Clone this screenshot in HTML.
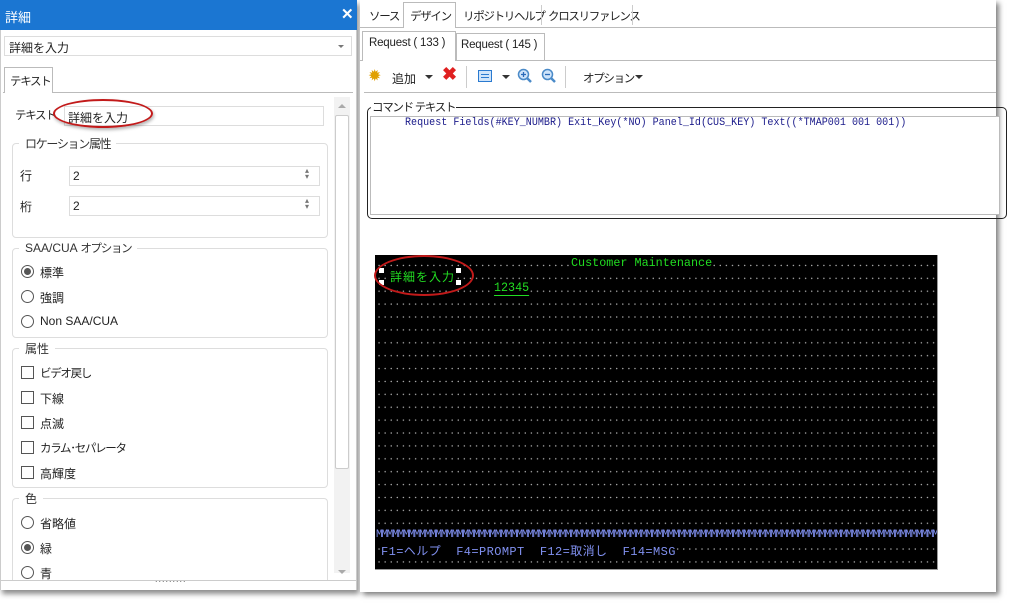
<!DOCTYPE html>
<html><head><meta charset="utf-8"><style>
*{box-sizing:border-box;margin:0;padding:0}
body{width:1010px;height:607px;background:#fff;position:relative;overflow:hidden;font-family:"Liberation Sans","Noto Sans CJK JP",sans-serif;font-size:12px;color:#222}
.a{position:absolute}
.box{position:absolute;border:1px solid #ddd;background:#fff}
.grp{position:absolute;border:1px solid #ddd;border-radius:4px}
.grp>.lg{position:absolute;top:-9px;left:6px;background:#fff;padding:0 6px;font-size:12px;color:#333;white-space:nowrap}
.rad{position:absolute;width:13px;height:13px;border:1px solid #555;border-radius:50%;background:#fff}
.rad.on::after{content:"";position:absolute;left:2px;top:2px;width:7px;height:7px;border-radius:50%;background:#555}
.chk{position:absolute;width:13px;height:13px;border:1px solid #555;background:#fff}
.t{position:absolute;font-size:12px;white-space:nowrap}
.k{font-size:11.5px;letter-spacing:-1.3px}
.mono{font-family:"Liberation Mono","Noto Sans CJK JP",monospace}
</style></head><body>
<!-- left panel -->
<div class="a" style="left:0;top:0;width:357px;height:590px;border:1px solid #ccc;box-shadow:2px 4px 5px rgba(0,0,0,.45)"></div>
<div class="a" style="left:0;top:0;width:357px;height:30px;background:#1b76d2"></div>
<div class="t" style="left:5px;top:7px;color:#fff;font-size:13px">詳細</div>
<div class="t" style="left:341px;top:5px;color:#fff;font-size:15px;font-weight:bold">✕</div>
<div class="box" style="left:4px;top:36px;width:348px;height:20px"></div>
<div class="t" style="left:9px;top:39px">詳細を入力</div>
<div class="a" style="left:338px;top:45px;border-left:3px solid transparent;border-right:3px solid transparent;border-top:3px solid #777"></div>
<div class="a" style="left:3px;top:92px;width:350px;height:1px;background:#bbb"></div>
<div class="a" style="left:4px;top:67px;width:49px;height:26px;border:1px solid #bbb;border-bottom:none;background:#fff"></div>
<div class="t k" style="left:10px;top:73px">テキスト</div>
<div class="t k" style="left:15px;top:107px">テキスト</div>
<div class="box" style="left:64px;top:106px;width:260px;height:20px"></div>
<div class="t" style="left:68px;top:109px">詳細を入力</div>
<div class="a" style="left:53px;top:99px;width:100px;height:29px;border:2px solid #c21a1a;border-radius:50%;box-shadow:1px 2px 3px rgba(0,0,0,.3)"></div>
<!-- scrollbar -->
<div class="a" style="left:334px;top:97px;width:16px;height:476px;background:#f2f2f2"></div>
<div class="a" style="left:335px;top:115px;width:14px;height:354px;background:#fff;border:1px solid #ccc;border-radius:2px"></div>
<div class="a" style="left:338px;top:104px;border-left:4px solid transparent;border-right:4px solid transparent;border-bottom:4px solid #aaa"></div>
<div class="a" style="left:338px;top:570px;border-left:4px solid transparent;border-right:4px solid transparent;border-top:4px solid #aaa"></div>
<!-- groups -->
<div class="grp" style="left:12px;top:143px;width:316px;height:95px"><div class="lg k">ロケーション属性</div></div>
<div class="t" style="left:20px;top:167px">行</div>
<div class="box" style="left:69px;top:166px;width:251px;height:20px"></div>
<div class="t" style="left:73px;top:169px">2</div>
<div class="t" style="left:305px;top:168px;font-size:8px;color:#777;line-height:6px">▴<br>▾</div>
<div class="t" style="left:20px;top:198px">桁</div>
<div class="box" style="left:69px;top:196px;width:251px;height:20px"></div>
<div class="t" style="left:73px;top:199px">2</div>
<div class="t" style="left:305px;top:198px;font-size:8px;color:#777;line-height:6px">▴<br>▾</div>
<div class="grp" style="left:12px;top:248px;width:316px;height:90px"><div class="lg">SAA/CUA <span class="k">オプション</span></div></div>
<div class="rad on" style="left:21px;top:265px"></div><div class="t" style="left:40px;top:264px">標準</div>
<div class="rad" style="left:21px;top:290px"></div><div class="t" style="left:40px;top:289px">強調</div>
<div class="rad" style="left:21px;top:315px"></div><div class="t" style="left:40px;top:314px">Non SAA/CUA</div>
<div class="grp" style="left:12px;top:348px;width:316px;height:140px"><div class="lg">属性</div></div>
<div class="chk" style="left:21px;top:366px"></div><div class="t k" style="left:40px;top:365px">ビデオ戻し</div>
<div class="chk" style="left:21px;top:391px"></div><div class="t" style="left:40px;top:390px">下線</div>
<div class="chk" style="left:21px;top:416px"></div><div class="t" style="left:40px;top:415px">点滅</div>
<div class="chk" style="left:21px;top:441px"></div><div class="t k" style="left:40px;top:440px">カラム･セパレータ</div>
<div class="chk" style="left:21px;top:466px"></div><div class="t" style="left:40px;top:465px">高輝度</div>
<div class="grp" style="left:12px;top:498px;width:316px;height:90px;border-bottom:none"><div class="lg">色</div></div>
<div class="rad" style="left:21px;top:516px"></div><div class="t" style="left:40px;top:515px">省略値</div>
<div class="rad on" style="left:21px;top:541px"></div><div class="t" style="left:40px;top:540px">緑</div>
<div class="rad" style="left:21px;top:566px"></div><div class="t" style="left:40px;top:565px">青</div>
<div class="a" style="left:1px;top:580px;width:355px;height:10px;background:#fff;border-top:1px solid #ccc"></div>
<div class="t" style="left:155px;top:574px;color:#666;font-size:9px;letter-spacing:1px">.........</div>

<!-- right panel -->
<div class="a" style="left:360px;top:0;width:636px;height:592px;background:#fff;box-shadow:3px 3px 5px rgba(0,0,0,.5)"></div>
<div class="a" style="left:360px;top:27px;width:636px;height:1px;background:#bbb"></div>
<div class="t k" style="left:369px;top:8px">ソース</div>
<div class="a" style="left:403px;top:2px;width:53px;height:26px;border:1px solid #bbb;border-bottom:none;background:#fff"></div>
<div class="t k" style="left:410px;top:8px">デザイン</div>
<div class="t k" style="left:463px;top:8px">リポジトリヘルプ</div>
<div class="a" style="left:541px;top:5px;width:1px;height:20px;background:#ccc"></div>
<div class="t k" style="left:548px;top:8px">クロスリファレンス</div>
<div class="a" style="left:632px;top:5px;width:1px;height:20px;background:#ccc"></div>
<div class="a" style="left:360px;top:60px;width:636px;height:1px;background:#bbb"></div>
<div class="a" style="left:362px;top:31px;width:94px;height:30px;border:1px solid #bbb;border-bottom:none;background:#fff"></div>
<div class="t" style="left:369px;top:37px;font-size:11.5px;letter-spacing:-0.2px">Request ( 133 )</div>
<div class="a" style="left:456px;top:33px;width:89px;height:27px;border:1px solid #bbb;border-bottom:none"></div>
<div class="t" style="left:461px;top:39px;font-size:11.5px;letter-spacing:-0.2px">Request ( 145 )</div>
<!-- toolbar -->
<div class="t" style="left:368px;top:66px;font-size:16px;color:#e0a000">✹</div>
<div class="t" style="left:392px;top:70px">追加</div>
<div class="a" style="left:425px;top:75px;border-left:4px solid transparent;border-right:4px solid transparent;border-top:4px solid #333"></div>
<div class="t" style="left:442px;top:64px;font-size:18px;color:#e02020;font-weight:bold">✖</div>
<div class="a" style="left:466px;top:66px;width:1px;height:22px;background:#ccc"></div>
<div class="a" style="left:478px;top:70px;width:14px;height:12px;border:1px solid #2a7ad0;background:#cfe4fa"></div>
<div class="a" style="left:481px;top:74px;width:8px;height:1px;background:#2a7ad0;box-shadow:0 3px 0 #2a7ad0"></div>
<div class="a" style="left:502px;top:75px;border-left:4px solid transparent;border-right:4px solid transparent;border-top:4px solid #333"></div>
<svg class="a" style="left:517px;top:68px" width="16" height="16"><circle cx="6.5" cy="6.5" r="5" fill="#cfe4fa" stroke="#4a8ac8" stroke-width="1.5"/><path d="M10 10l4 4" stroke="#4a8ac8" stroke-width="2.5"/><path d="M4 6.5h5M6.5 4v5" stroke="#2a6ab8" stroke-width="1.3"/></svg>
<svg class="a" style="left:541px;top:68px" width="16" height="16"><circle cx="6.5" cy="6.5" r="5" fill="#cfe4fa" stroke="#4a8ac8" stroke-width="1.5"/><path d="M10 10l4 4" stroke="#4a8ac8" stroke-width="2.5"/><path d="M4 6.5h5" stroke="#2a6ab8" stroke-width="1.3"/></svg>
<div class="a" style="left:565px;top:66px;width:1px;height:22px;background:#ccc"></div>
<div class="t k" style="left:583px;top:70px">オプション</div>
<div class="a" style="left:635px;top:75px;border-left:4px solid transparent;border-right:4px solid transparent;border-top:4px solid #333"></div>
<div class="a" style="left:364px;top:92px;width:632px;height:1px;background:#bbb"></div>
<!-- command text -->
<div class="a" style="left:367px;top:107px;width:640px;height:112px;border:1px solid #222;border-radius:5px"></div>
<div class="a" style="left:370px;top:116px;width:630px;height:99px;border:1px solid #bbb;background:#fff"></div>
<div class="t k" style="left:371px;top:99px;background:#fff;padding:0 1px">コマンド テキスト</div>
<div class="t mono" style="left:405px;top:117px;color:#1a1a8a;font-size:11px;transform:scaleX(.915);transform-origin:left">Request Fields(#KEY_NUMBR) Exit_Key(*NO) Panel_Id(CUS_KEY) Text((*TMAP001 001 001))</div>
<!-- screen -->
<div class="a" style="left:375px;top:255px;width:563px;height:315px;background-color:#000;background-image:radial-gradient(circle,#aaa 0.6px,transparent 0.9px);background-size:6.1px 12.9px;background-position:1px 4px;border-right:1px solid #999;border-bottom:1px solid #999"></div>
<div class="t mono" style="left:571px;top:256px;color:#22dd22;font-size:12px;background:#000;transform:scaleX(.98);transform-origin:left">Customer Maintenance</div>
<div class="t" style="left:390px;top:268px;color:#22dd22;font-size:12px;letter-spacing:1px;background:#000">詳細を入力</div>
<div class="a" style="left:379px;top:268px;width:5px;height:5px;background:#fff"></div>
<div class="a" style="left:379px;top:280px;width:5px;height:5px;background:#fff"></div>
<div class="a" style="left:456px;top:268px;width:5px;height:5px;background:#fff"></div>
<div class="a" style="left:456px;top:280px;width:5px;height:5px;background:#fff"></div>
<div class="a" style="left:374px;top:255px;width:100px;height:41px;border:2px solid #c21a1a;border-radius:50%"></div>
<div class="t mono" style="left:494px;top:280px;color:#22dd22;font-size:13px;background:#000;border-bottom:1px solid #22dd22;line-height:15px;transform:scaleX(.9);transform-origin:left">12345</div>
<div class="a mono" style="left:376px;top:529px;width:561px;height:12px;overflow:hidden;color:#8090f0;font-size:11px;line-height:12px;white-space:nowrap;letter-spacing:-1.2px;background:#000">MMMMMMMMMMMMMMMMMMMMMMMMMMMMMMMMMMMMMMMMMMMMMMMMMMMMMMMMMMMMMMMMMMMMMMMMMMMMMMMMMMMMMMMMMMMMMMMMMMMMMMMMMMMMMMMMMMMMMMMMMMMMMM</div>
<div class="t mono" style="left:381px;top:542px;color:#8090f0;font-size:12px;background:#000;white-space:pre;letter-spacing:0.4px">F1=ヘルプ  F4=PROMPT  F12=取消し  F14=MSG</div>
</body></html>
